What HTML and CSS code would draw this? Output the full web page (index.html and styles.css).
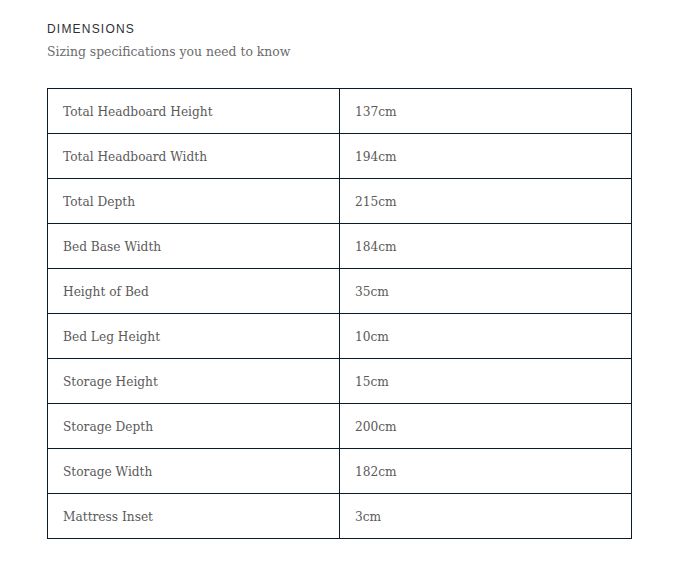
FILE: index.html
```html
<!DOCTYPE html>
<html>
<head>
<meta charset="utf-8">
<link rel="stylesheet" href="styles.css">
</head>
<body>
<section class="dims">
  <h2 class="eyebrow">DIMENSIONS</h2>
  <p class="sub">Sizing specifications you need to know</p>
  <table class="spec">
    <tr><td>Total Headboard Height</td><td>137cm</td></tr>
    <tr><td>Total Headboard Width</td><td>194cm</td></tr>
    <tr><td>Total Depth</td><td>215cm</td></tr>
    <tr><td>Bed Base Width</td><td>184cm</td></tr>
    <tr><td>Height of Bed</td><td>35cm</td></tr>
    <tr><td>Bed Leg Height</td><td>10cm</td></tr>
    <tr><td>Storage Height</td><td>15cm</td></tr>
    <tr><td>Storage Depth</td><td>200cm</td></tr>
    <tr><td>Storage Width</td><td>182cm</td></tr>
    <tr><td>Mattress Inset</td><td>3cm</td></tr>
  </table>
</section>
</body>
</html>
```

FILE: styles.css
```css
html, body {
  margin: 0;
  background: #ffffff;
}
.dims {
  padding: 21px 0 0 47px;
}
.eyebrow {
  margin: 0;
  font-family: "Liberation Sans", Arial, sans-serif;
  font-weight: 400;
  font-size: 12px;
  letter-spacing: 1.2px;
  line-height: 16px;
  color: #2b3138;
}
.sub {
  margin: 6px 0 0 0;
  font-family: "DejaVu Serif", serif;
  font-size: 12.4px;
  line-height: 18px;
  color: #6b6b6b;
}
.spec {
  margin-top: 27px;
  width: 585px;
  border-collapse: collapse;
  font-family: "DejaVu Serif", serif;
  font-size: 12.2px;
  color: #5a5a5a;
}
.spec td {
  border: 1px solid #0a1a26;
  height: 45px;
  padding: 2px 15px 0 15px;
  box-sizing: border-box;
}
.spec td:first-child {
  width: 292px;
}
```
